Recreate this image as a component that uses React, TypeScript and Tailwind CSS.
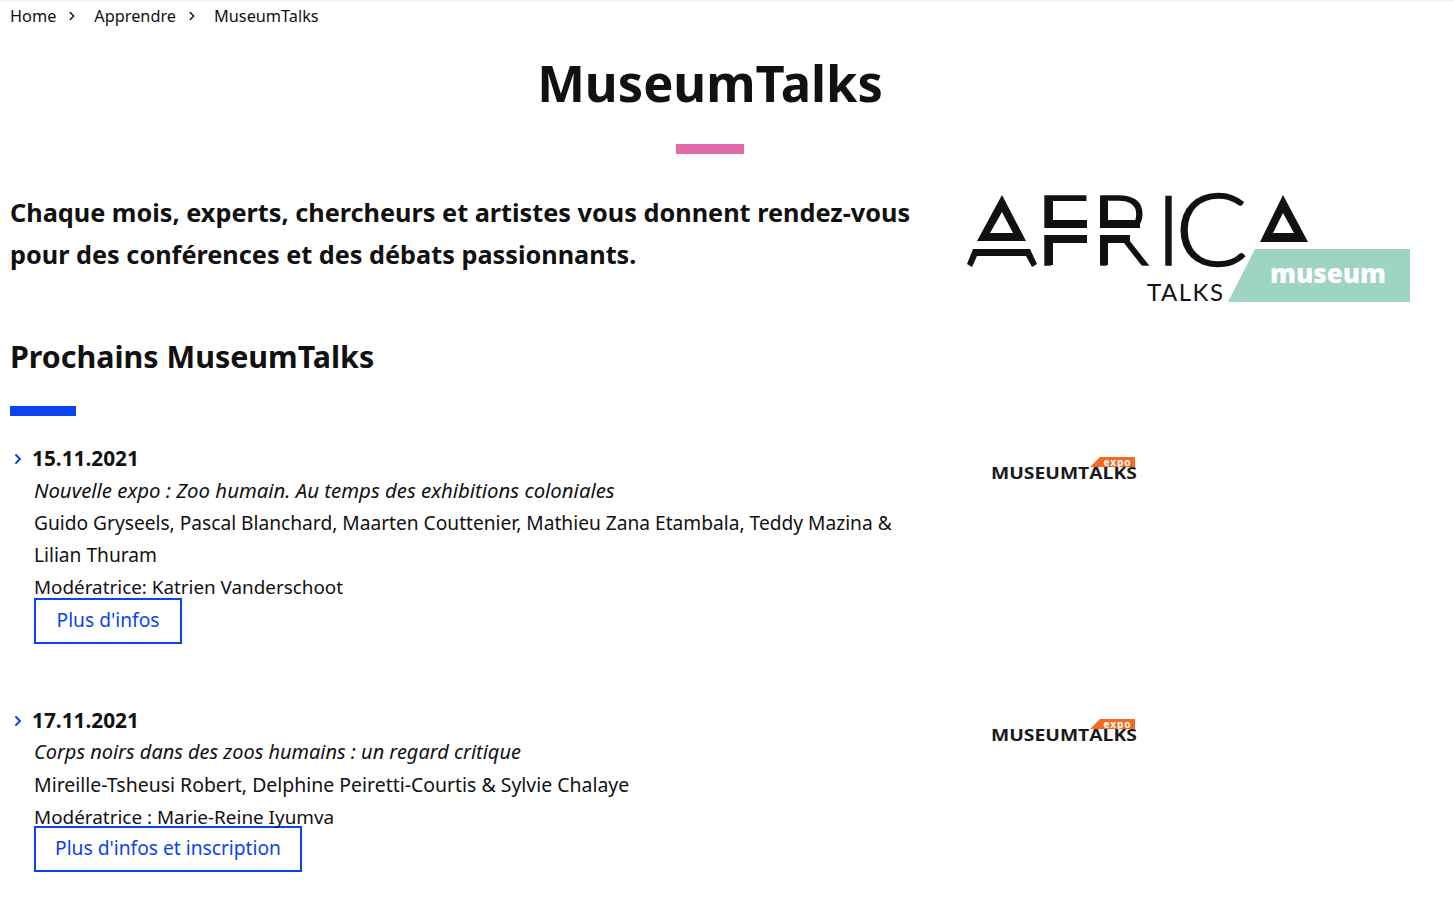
import { ChevronRight } from 'lucide-react';

const font = { fontFamily: '"Noto Sans", sans-serif' };

// Event list content
const events = [
  {
    date: '15.11.2021',
    title: 'Nouvelle expo : Zoo humain. Au temps des exhibitions coloniales',
    titleClass: 'text-[20.37px]',
    lines: [
      {
        text: 'Guido Gryseels, Pascal Blanchard, Maarten Couttenier, Mathieu Zana Etambala, Teddy Mazina & Lilian Thuram',
        className: 'text-[19.17px]',
      },
      { text: 'Modératrice: Katrien Vanderschoot', className: 'text-[18.85px]' },
    ],
    cta: "Plus d'infos",
    ctaClass: 'w-[148px] -mt-[5px]',
  },
  {
    date: '17.11.2021',
    title: 'Corps noirs dans des zoos humains : un regard critique',
    titleClass: 'text-[19.95px]',
    lines: [
      {
        text: 'Mireille-Tsheusi Robert, Delphine Peiretti-Courtis & Sylvie Chalaye',
        className: 'text-[19.45px]',
      },
      { text: 'Modératrice : Marie-Reine Iyumva', className: 'text-[18.9px]' },
    ],
    cta: "Plus d'infos et inscription",
    ctaClass: 'w-[268px] -mt-[7px]',
  },
];

function AfricaLogo() {
  return (
    <svg width="480" height="135" viewBox="0 0 480 135" className="shrink-0">
      {/* left A */}
      <path
        fillRule="evenodd"
        fill="#111"
        d="M52 15 L76 61 L27 61 Z M52 32 L40 53 L63 53 Z"
      />
      <path fill="#111" d="M23 69 L80 69 L87 84 L82 87 L76 76 L27 76 L22 87 L17 84 Z" />
      <text
        x="85 141 206"
        y="85"
        fontSize="96"
        fontWeight="300"
        fill="#111"
        stroke="#111"
        strokeWidth="1.5"
        style={{ fontFamily: 'Lato, sans-serif' }}
      >
        FRI
      </text>
      <text
        transform="translate(225 86) scale(1.08 1)"
        fontSize="100"
        fontWeight="300"
        fill="#111"
        stroke="#111"
        strokeWidth="1.5"
        style={{ fontFamily: 'Lato, sans-serif' }}
      >
        C
      </text>
      {/* split bars of the F and the R */}
      <rect x="92" y="48" width="112" height="7" fill="#fff" />
      <rect x="95" y="40" width="42" height="8" fill="#111" />
      <rect x="95" y="55" width="42" height="8" fill="#111" />
      <rect x="150" y="40" width="40" height="8" fill="#111" />
      <rect x="150" y="55" width="30" height="8" fill="#111" />
      <rect x="95" y="16" width="8" height="32" fill="#111" />
      <rect x="95" y="55" width="8" height="30" fill="#111" />
      <rect x="150" y="16" width="8" height="32" fill="#111" />
      <rect x="150" y="55" width="8" height="30" fill="#111" />
      {/* right A */}
      <path
        fillRule="evenodd"
        fill="#111"
        d="M333 15 L358 62 L310 62 Z M333 33 L323 53 L344 53 Z"
      />
      <path fill="#9dd4c3" d="M305 69 L460 69 L460 122 L278 122 Z" />
      <text
        x="378"
        y="103"
        textAnchor="middle"
        textLength="116"
        fontSize="26"
        fontWeight="800"
        fill="#fff"
        style={{ fontFamily: '"Open Sans", sans-serif' }}
      >
        museum
      </text>
      <text
        x="197"
        y="121"
        textLength="76"
        fontSize="24"
        fill="#111"
        style={{ fontFamily: 'Lato, sans-serif' }}
      >
        TALKS
      </text>
    </svg>
  );
}

function MuseumTalksLogo() {
  return (
    <svg width="170" height="50" viewBox="0 0 170 50" className="shrink-0">
      <path fill="#f26b21" d="M120 11 L155 11 L155 21 L110 21 Z" />
      <text
        x="137"
        y="19.5"
        textAnchor="middle"
        textLength="27"
        fontSize="10"
        fontWeight="700"
        fill="#fff"
        style={{ fontFamily: '"Open Sans", sans-serif' }}
      >
        expo
      </text>
      <text
        x="11"
        y="33"
        textLength="146"
        lengthAdjust="spacingAndGlyphs"
        fontSize="15.5"
        fontWeight="700"
        fill="#1a1a1a"
        style={{ fontFamily: '"Open Sans", sans-serif' }}
      >
        MUSEUMTALKS
      </text>
    </svg>
  );
}

export default function App() {
  return (
    <div className="min-h-[906px] bg-white text-[#111] border-t-2 border-[#f4f4f4]" style={font}>
      {/* Breadcrumb */}
      <nav className="flex items-center h-[28px] pl-[10px] text-[16.3px]">
        <span>Home</span>
        <ChevronRight className="w-[14px] h-[14px] ml-[9px] mr-[15px]" strokeWidth={2.5} />
        <span>Apprendre</span>
        <ChevronRight className="w-[14px] h-[14px] ml-[9px] mr-[15px]" strokeWidth={2.5} />
        <span>MuseumTalks</span>
      </nav>

      <div className="w-[1420px]">
        <h1 className="mt-[23px] text-center text-[50.6px] leading-[60px] font-bold">MuseumTalks</h1>
        <div className="mx-auto mt-[31px] w-[68px] h-[10px] bg-[#e26aa8]" />
      </div>

      {/* Intro */}
      <div className="flex mt-[28px] pl-[10px]">
        <p className="w-[940px] pt-[9px] text-[25.27px] leading-[42px] font-bold">
          Chaque mois, experts, chercheurs et artistes vous donnent rendez-vous pour des conférences et des débats passionnants.
        </p>
        <div className="-mt-[2px] h-[124px]">
          <AfricaLogo />
        </div>
      </div>

      <h2 className="mt-[31px] pl-[10px] text-[30.4px] leading-[44px] font-bold">Prochains MuseumTalks</h2>
      <div className="ml-[10px] mt-[27px] w-[66px] h-[10px] bg-[#0a44f0]" />

      {/* Events */}
      <div className="mt-[27px] flex flex-col gap-[61px]">
        {events.map((event) => (
          <div key={event.date} className="flex pl-[10px]">
            <div className="w-[970px] leading-[32px]">
              <div className="flex items-center h-[30px] mb-[1px] text-[20.8px] font-bold">
                <ChevronRight className="w-[16px] h-[16px] mt-[2px] mr-[6px] text-[#0a44f0]" strokeWidth={3} />
                {event.date}
              </div>
              <div className="pl-[24px] w-[900px]">
                <p className={`${event.titleClass} mb-[1px] italic`}>{event.title}</p>
                {event.lines.map((line) => (
                  <p key={line.text} className={line.className}>{line.text}</p>
                ))}
                <a className={`${event.ctaClass} block h-[46px] border-2 border-[#0a44f0] text-center text-[#0a44f0] text-[19.2px] leading-[40px]`}>
                  {event.cta}
                </a>
              </div>
            </div>
            <div className="mt-[3px]">
              <MuseumTalksLogo />
            </div>
          </div>
        ))}
      </div>
    </div>
  );
}
